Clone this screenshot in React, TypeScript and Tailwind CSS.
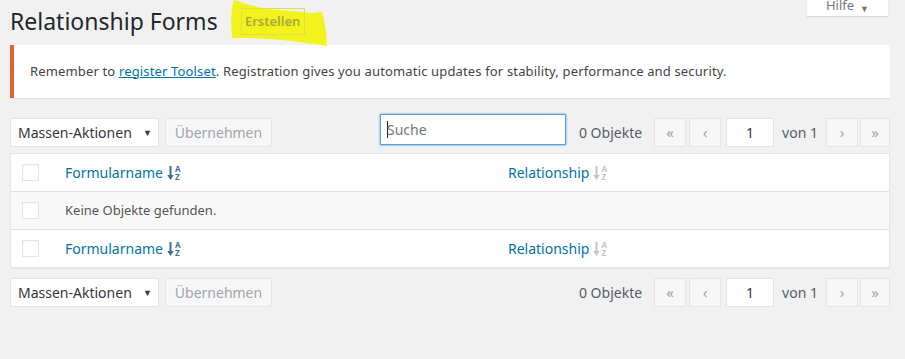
import React from 'react';

const font = { fontFamily: '"Noto Sans", "Open Sans", sans-serif' };

function SortIcon({ active }: { active: boolean }) {
  const c = active ? '#3c6f95' : '#c3c4c7';
  return (
    <span className="ml-[4px] inline-flex items-center" style={{ color: c }}>
      <svg width="7" height="16" viewBox="0 0 7 16">
        <path d="M3.5 1v11" stroke={c} strokeWidth="2" />
        <path d="M0.3 10 L3.5 15 L6.7 10 Z" fill={c} />
      </svg>
      <span className="ml-[1px] flex flex-col text-[8px] font-bold leading-[8px]">
        <span>A</span>
        <span>Z</span>
      </span>
    </span>
  );
}

function Checkbox() {
  return (
    <span className="block h-[17px] w-[17px] border border-[#e2e4e7] bg-white shadow-[inset_0_1px_2px_rgba(0,0,0,0.04)]" />
  );
}

function PageBtn({ children, narrow }: { children: React.ReactNode; narrow?: boolean }) {
  return (
    <span
      className={`flex h-[29px] items-center justify-center border border-[#e5e5e5] bg-[#f7f7f7] text-[15px] text-[#a0a5aa] ${
        narrow ? 'w-[30px]' : 'w-[32px]'
      }`}
    >
      {children}
    </span>
  );
}

function TableNav({ top }: { top?: boolean }) {
  return (
    <div className="flex items-start">
      <div className="mt-[4px] flex h-[29px] w-[149px] items-center justify-between border border-[#e2e4e7] bg-white pl-[7px] pr-[6px] text-[14px] text-[#32373c]">
        <span>Massen-Aktionen</span>
        <span className="text-[9px]">▼</span>
      </div>
      <div className="ml-[6px] mt-[4px] flex h-[29px] w-[107px] items-center justify-center rounded-[2px] border border-[#e5e5e5] bg-[#f7f7f7] text-[14px] text-[#a0a5aa]">
        Übernehmen
      </div>
      <div className="flex-1" />
      {top && (
        <div className="mr-[13px] flex h-[31px] w-[186px] items-center border border-[#5b9dd9] bg-white pl-[6px] text-[14px] text-[#72777c] shadow-[0_0_2px_rgba(30,140,190,0.8)]">
          <span className="mr-[-1px] h-[17px] w-[1px] bg-[#222]" />
          Suche
        </div>
      )}
      <div className="mt-[4px] flex h-[29px] items-center">
        <span className="mr-[12px] text-[14px] text-[#555d66]">0 Objekte</span>
        <PageBtn>«</PageBtn>
        <span className="ml-[3px]" />
        <PageBtn>‹</PageBtn>
        <span className="ml-[5px] flex h-[29px] w-[48px] items-center justify-center border border-[#e2e4e7] bg-white text-[14px] text-[#32373c]">
          1
        </span>
        <span className="ml-[8px] mr-[8px] text-[14px] text-[#555d66]">von 1</span>
        <PageBtn>›</PageBtn>
        <span className="ml-[2px]" />
        <PageBtn narrow>»</PageBtn>
      </div>
    </div>
  );
}

function HeadRow({ bottom }: { bottom?: boolean }) {
  return (
    <div className={`flex h-[38px] items-center ${bottom ? 'border-t border-[#e1e1e1]' : 'border-b border-[#e1e1e1]'}`}>
      <div className="w-[44px] pl-[11px]">
        <Checkbox />
      </div>
      <div className="flex w-[443px] items-center pl-[10px] text-[14px] text-[#0073aa]">
        Formularname
        <SortIcon active />
      </div>
      <div className="flex items-center pl-[10px] text-[14px] text-[#0073aa]">
        Relationship
        <SortIcon active={false} />
      </div>
    </div>
  );
}

export default function App() {
  return (
    <div className="relative h-[359px] w-full overflow-hidden bg-[#f1f1f1] pl-[10px] pr-[15px]" style={font}>
      <div className="absolute right-[17px] top-[-8px] flex h-[24px] w-[81px] items-end justify-center bg-white pb-[1px] text-[13px] text-[#72777c] shadow-[0_1px_1px_rgba(0,0,0,0.1)]">
        Hilfe <span className="ml-[6px] text-[9px]">▼</span>
      </div>

      <div className="relative flex h-[45px] items-start pt-[6px]">
        <h1 className="text-[23px] leading-[30px] font-normal text-[#23282d]">Relationship Forms</h1>
        <div className="relative ml-[23px] mt-[2px]">
          <svg className="absolute left-[-11px] top-[-8px]" width="100" height="46" viewBox="0 0 100 46">
            <path
              d="M4 0 L16 4 L36 9 L60 11 L82 13 L92 12 L94 20 L96 32 L97 46 L84 44 L62 41 L40 39 L18 38 L2 38 L1 22 L2 8 Z"
              fill="#f2f21c"
            />
          </svg>
          <span className="relative flex h-[27px] w-[64px] items-center justify-center border border-[#dede4a] text-[13px] font-semibold text-[#a9a93a]">
            Erstellen
          </span>
        </div>
      </div>

      <div className="flex h-[53px] items-center border-l-4 border-[#e0643a] bg-white pl-[16px] text-[13px] tracking-[0.15px] text-[#444] shadow-[0_1px_1px_rgba(0,0,0,0.06)]">
        <span>
          Remember to{' '}
          <span className="text-[#0073aa] underline">register Toolset</span>. Registration gives you automatic
          updates for stability, performance and security.
        </span>
      </div>

      <div className="mt-[16px]">
        <TableNav top />
      </div>

      <div className="mt-[6px] border border-[#e5e5e5] bg-white shadow-[0_1px_1px_rgba(0,0,0,0.04)]">
        <HeadRow />
        <div className="flex h-[37px] items-center bg-[#f9f9f9]">
          <div className="w-[44px] pl-[11px]">
            <Checkbox />
          </div>
          <div className="pl-[10px] text-[13px] text-[#555]">Keine Objekte gefunden.</div>
        </div>
        <HeadRow bottom />
      </div>

      <div className="mt-[6px]">
        <TableNav />
      </div>
    </div>
  );
}
